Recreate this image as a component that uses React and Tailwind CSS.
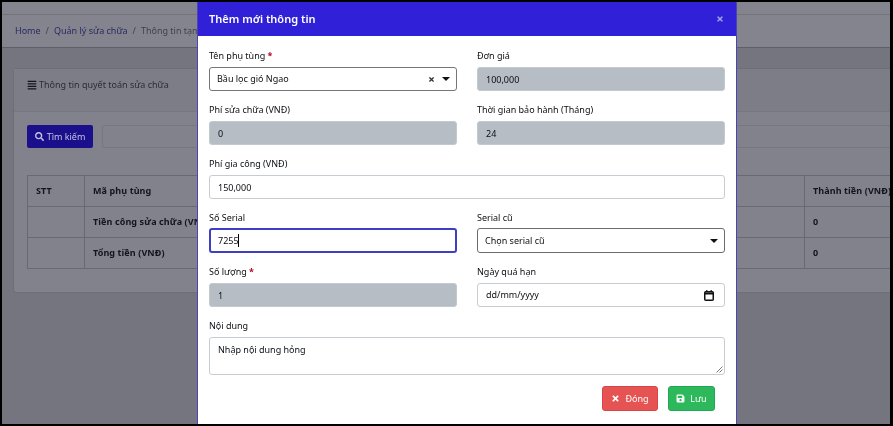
import { FaAlignJustify, FaSearch, FaTimes, FaSave } from 'react-icons/fa'

function Label({ children, required }) {
  return (
    <label className="block h-[13px] text-[9px] leading-[13px] text-[#0c0e12]">
      {children}
      {required && <span className="text-[#b00020] font-bold"> *</span>}
    </label>
  )
}

function Caret() {
  return (
    <svg width="8" height="4" viewBox="0 0 8 4" className="shrink-0">
      <path d="M0 0h8L4 4z" fill="#111" />
    </svg>
  )
}

function ReadOnly({ value }) {
  return (
    <div className="mt-[5px] h-[24px] rounded-[3px] border border-[#c3c9d0] bg-[#b6bdc5] px-[8px] text-[9px] leading-[23px] text-[#0c0e12]">
      {value}
    </div>
  )
}

function Field({ label, required, children }) {
  return (
    <div className="flex-1 min-w-0">
      <Label required={required}>{label}</Label>
      {children}
    </div>
  )
}

function App() {
  return (
    <div className="relative h-[426px] w-[893px] overflow-hidden bg-black pt-[2px] pb-[2px] pl-[2px] pr-[3px] font-['Noto_Sans',sans-serif] blur-[0.3px]">
      <div className="h-full overflow-hidden bg-[#757580]">
        {/* page behind the modal */}
        <div className="h-[13px] border-b border-[#73737d] bg-[#84848e]" />
        <div className="flex h-[33px] items-center gap-[5px] border-b border-[#5f5f6c] bg-[#84848e] pl-[13px] text-[9px] text-[#42424f]">
          <span className="text-[#2a2a62]">Home</span>
          <span>/</span>
          <span className="text-[#2a2a62]">Quản lý sửa chữa</span>
          <span>/</span>
          <span>Thông tin tạm</span>
        </div>
        <div className="pl-[11px] pt-[20px]">
          <div className="h-[225px] w-[920px] rounded-[3px] border border-[#6e6e79] bg-[#82828c]">
            <div className="flex h-[43px] items-start gap-[2px] border-b border-[#777781] bg-[#7d7d87] pl-[13px] pt-[9px] text-[9px] text-[#2c2c38]">
              <FaAlignJustify className="mt-[2px] text-[10px] text-[#14141f]" />
              <span>Thông tin quyết toán sửa chữa</span>
            </div>
            <div className="pl-[13px] pt-[13px]">
              <div className="flex gap-[9px]">
                <button className="flex h-[23px] w-[66px] items-center justify-center gap-[3px] rounded-[2px] bg-[#1b0f8c] text-[9px] text-[#c4c4de]">
                  <FaSearch className="text-[9px]" />
                  Tìm kiếm
                </button>
                <div className="h-[23px] flex-1 rounded-[2px] border border-[#777781] bg-[#82828c]" />
              </div>
              <div className="mt-[27px] grid grid-cols-[57px_720px_1fr] border-y border-l border-[#696975] text-[9px] font-bold tracking-[0.1px] text-[#14141f]">
                <div className="flex h-[31px] items-center border-r border-b border-[#696975] pl-[8px]">STT</div>
                <div className="flex h-[31px] items-center border-r border-b border-[#696975] pl-[8px]">Mã phụ tùng</div>
                <div className="flex h-[31px] items-center border-b border-[#696975] pl-[8px] whitespace-nowrap">Thành tiền (VNĐ)</div>
                <div className="h-[31px] border-r border-b border-[#696975]" />
                <div className="flex h-[31px] items-center border-r border-b border-[#696975] pl-[8px] whitespace-nowrap">Tiền công sửa chữa (VN</div>
                <div className="flex h-[31px] items-center border-b border-[#696975] pl-[8px]">0</div>
                <div className="h-[30px] border-r border-[#696975]" />
                <div className="flex h-[30px] items-center border-r border-[#696975] pl-[8px]">Tổng tiền (VNĐ)</div>
                <div className="flex h-[30px] items-center pl-[8px]">0</div>
              </div>
            </div>
          </div>
        </div>
      </div>

      {/* modal */}
      <div className="absolute left-[197px] top-[2px] h-[422px] w-[540px] border-x border-[#4a45b5] bg-white">
        <div className="flex h-[34px] items-center justify-between bg-[#3020d8] pl-[11px] pr-[12px]">
          <span className="text-[11px] font-semibold text-white">Thêm mới thông tin</span>
          <FaTimes className="text-[8px] text-[#a4a4ee]" />
        </div>

        <div className="flex flex-col gap-[12px] px-[11px] pt-[13px]">
          <div className="flex gap-[20px]">
            <Field label="Tên phụ tùng" required>
              <div className="mt-[5px] flex h-[24px] items-center rounded-[3px] border border-[#767676] bg-white pl-[7px] pr-[6px] text-[9px] text-[#0c0e12]">
                <span className="flex-1">Bầu lọc gió Ngao</span>
                <FaTimes className="mr-[7px] text-[7px] text-[#333]" />
                <Caret />
              </div>
            </Field>
            <Field label="Đơn giá">
              <ReadOnly value="100,000" />
            </Field>
          </div>

          <div className="flex gap-[20px]">
            <Field label="Phí sửa chữa (VNĐ)">
              <ReadOnly value="0" />
            </Field>
            <Field label="Thời gian bảo hành (Tháng)">
              <ReadOnly value="24" />
            </Field>
          </div>

          <Field label="Phí gia công (VNĐ)">
            <div className="mt-[5px] h-[24px] rounded-[3px] border border-[#c6ccd2] bg-white px-[8px] text-[9px] leading-[23px] text-[#0c0e12]">
              150,000
            </div>
          </Field>

          <div className="flex gap-[20px]">
            <Field label="Số Serial">
              <div className="mt-[4px] h-[25px] rounded-[3px] border-2 border-[#3f3fc4] bg-white px-[7px] text-[9px] leading-[22px] text-[#0c0e12]">
                7255<span className="ml-[-1px] border-l border-black" />
              </div>
            </Field>
            <Field label="Serial cũ">
              <div className="mt-[4px] flex h-[25px] items-center justify-between rounded-[3px] border border-[#6c6c6c] bg-white pl-[7px] pr-[6px] text-[9px] text-[#0c0e12]">
                <span>Chọn serial cũ</span>
                <Caret />
              </div>
            </Field>
          </div>

          <div className="flex gap-[20px]">
            <Field label="Số lượng" required>
              <ReadOnly value="1" />
            </Field>
            <Field label="Ngày quá hạn">
              <div className="mt-[5px] flex h-[24px] items-center justify-between rounded-[3px] border border-[#c6ccd2] bg-white pl-[8px] pr-[10px] text-[9px] text-[#0c0e12]">
                <span>dd/mm/yyyy</span>
                <svg width="10" height="11" viewBox="0 0 10 11" fill="none" stroke="#111">
                  <rect x="0.75" y="1.75" width="8.5" height="8.5" rx="1" strokeWidth="1.5" />
                  <path d="M1 3.5h8" strokeWidth="2" />
                  <path d="M2.8 0v2M7.2 0v2" strokeWidth="1.2" />
                </svg>
              </div>
            </Field>
          </div>

          <Field label="Nội dung">
            <div className="relative mt-[5px] h-[38px] rounded-[3px] border border-[#c6ccd2] bg-white px-[8px] pt-[5px] text-[9px] leading-[14px] text-[#0c0e12]">
              Nhập nội dung hỏng
              <svg width="7" height="7" viewBox="0 0 7 7" stroke="#777" className="absolute bottom-[1px] right-[1px]">
                <path d="M0.5 6.5l6-6M3.5 6.5l3-3" />
              </svg>
            </div>
          </Field>
        </div>

        <div className="mt-[11px] flex justify-end gap-[10px] pr-[21px]">
          <button className="flex h-[25px] w-[56px] items-center justify-center gap-[5px] rounded-[3px] border border-[#d9434a] bg-[#e55353] text-[9px] text-white">
            <FaTimes className="text-[9px]" />
            Đóng
          </button>
          <button className="flex h-[25px] w-[47px] items-center justify-center gap-[5px] rounded-[3px] border border-[#1fa855] bg-[#2eb85c] text-[9px] text-white">
            <FaSave className="text-[9px]" />
            Lưu
          </button>
        </div>
      </div>
    </div>
  )
}

export default App
